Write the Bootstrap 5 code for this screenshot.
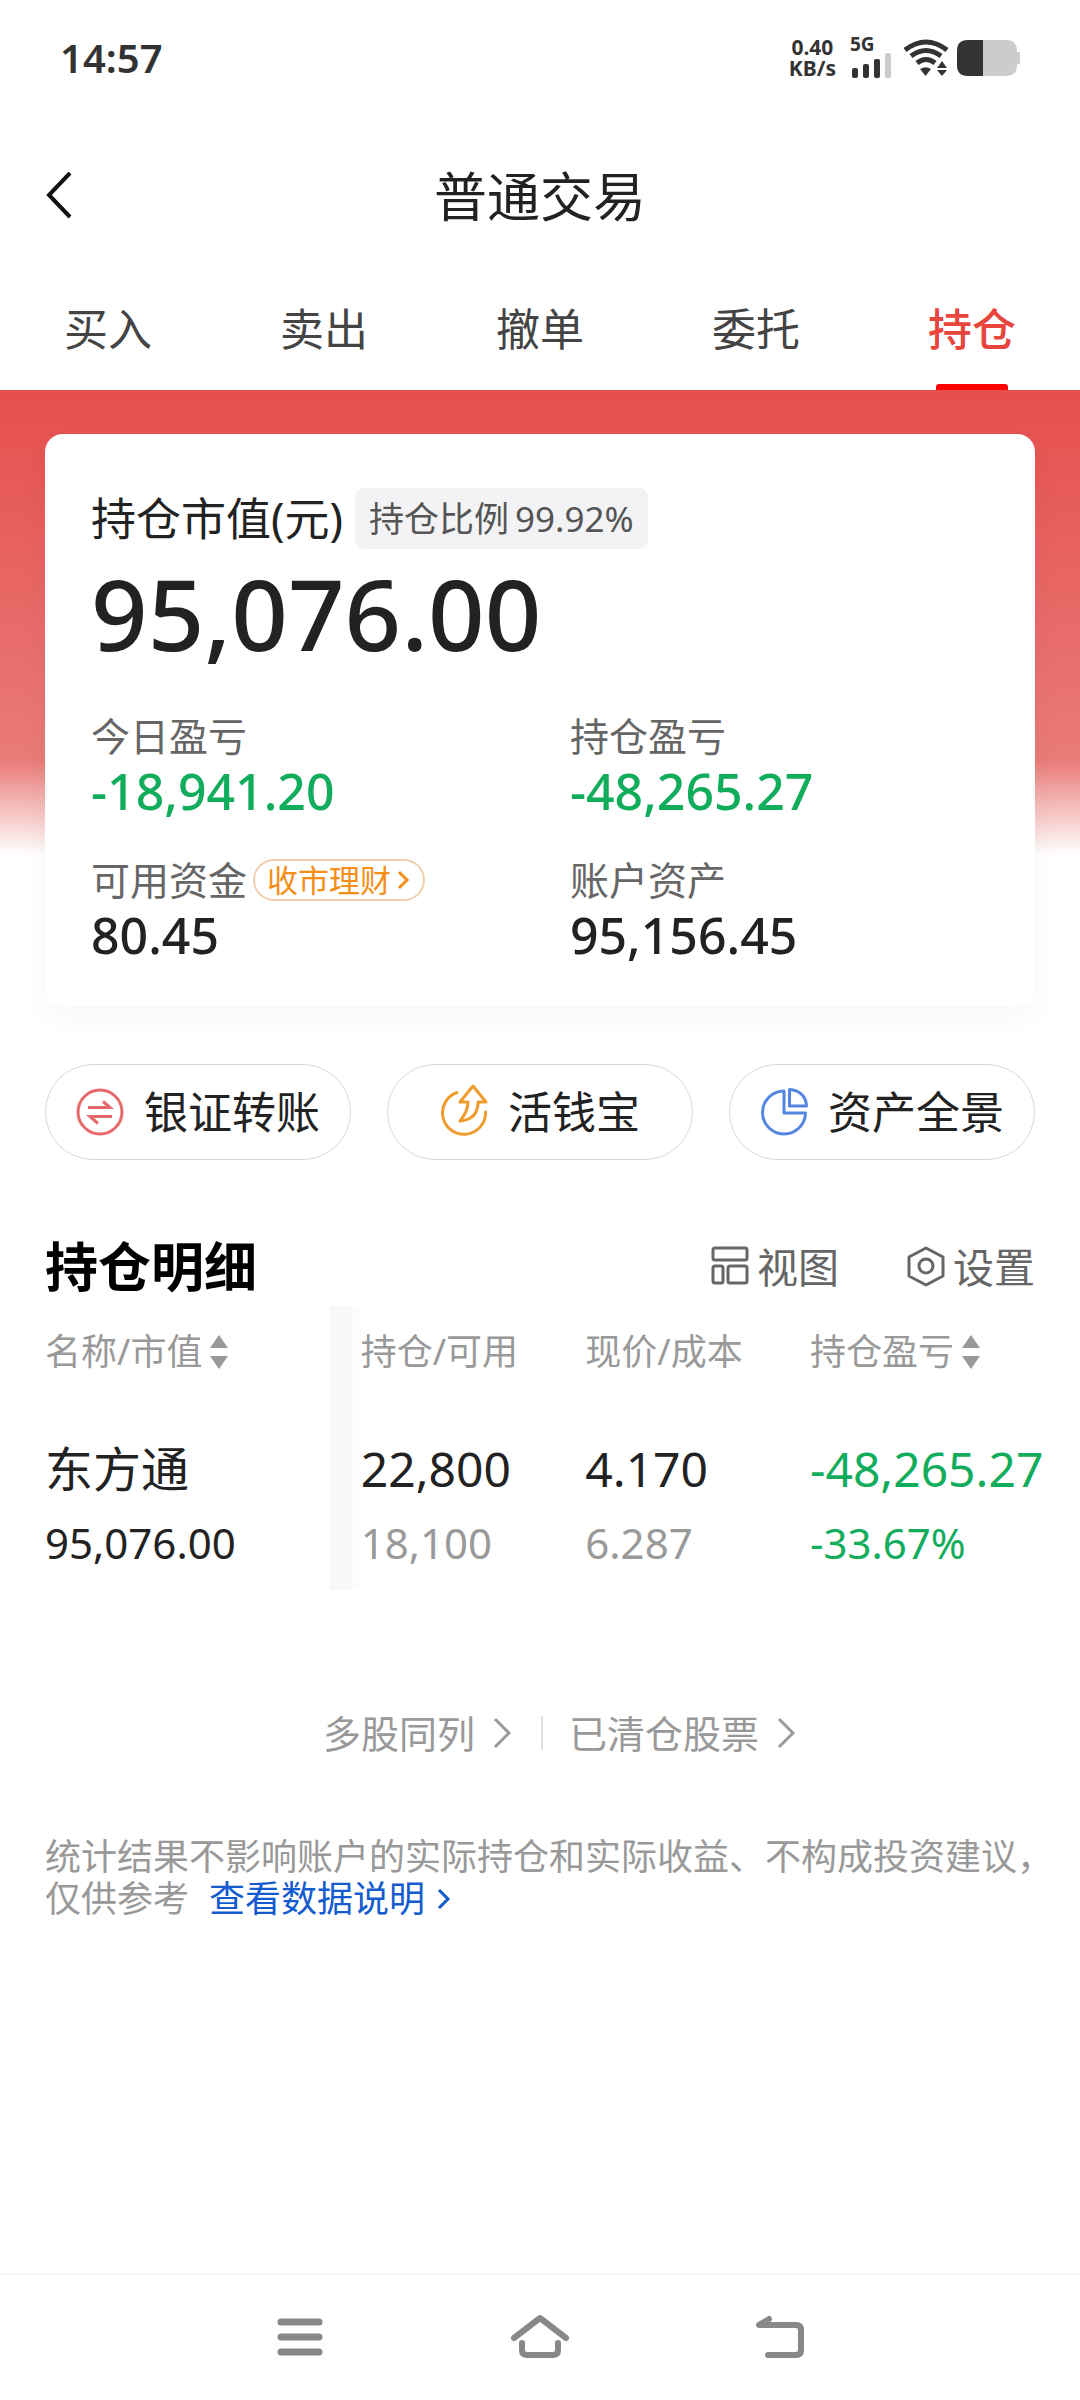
<!DOCTYPE html>
<html lang="zh-CN">
<head>
<meta charset="utf-8">
<meta name="viewport" content="width=device-width, initial-scale=1">
<title>普通交易</title>
<link href="https://cdn.jsdelivr.net/npm/bootstrap@5.3.0/dist/css/bootstrap.min.css" rel="stylesheet">
<style>
  body { font-family: "Noto Sans", "Noto Sans CJK SC", sans-serif; color: #222; background: #fff; }
  a { text-decoration: none; }
  svg { display: block; flex: none; fill: none; }
  button { border: 0; background: none; padding: 0; color: inherit; }

  .status-bar { height: 116px; padding: 0 60px; color: #333; font-weight: 700; }
  .clock { font-size: 40px; font-weight: 600; line-height: 48px; }
  .net-speed { font-size: 21px; line-height: 21px; margin-right: 14px; }
  .cell-type { font-size: 19px; line-height: 16px; }
  .signal { margin: 0 9px 2px 0; }

  .title-bar { height: 162px; padding: 0 45px; }
  .title-bar h1 { font-size: 53px; line-height: 72px; font-weight: 400; color: #222; }
  .side-slot { width: 60px; }

  .trade-tabs { height: 112px; }
  .trade-tabs .nav-link { position: relative; height: 112px; padding: 21px 0 0; font-size: 44px; line-height: 60px; color: #444; }
  .trade-tabs .nav-link.active { color: #e8453c; font-weight: 500; }
  .trade-tabs .nav-link.active::after { content: ""; position: absolute; left: 50%; bottom: 0; width: 72px; height: 6px; margin-left: -36px; border-radius: 3px 3px 0 0; background: #fe0000; }

  .hero { padding: 44px 45px 0; background: linear-gradient(#e54f4e 0, #ea7b78 370px, #fff 465px); }
  .asset-card { border: 0; border-radius: 18px; padding: 54px 46px 44px; box-shadow: 0 10px 30px rgba(0,0,0,.04); }
  .asset-title { font-size: 45px; line-height: 61px; }
  .share-tag { font-size: 35px; line-height: 61px; padding: 0 14px; border-radius: 9px; background: #f3f3f5; color: #555; gap: 6px; margin-left: 12px; }
  .total { font-size: 99px; line-height: 128px; font-weight: 500; }
  .stats { display: grid; grid-template-columns: 8fr 7fr; row-gap: 34px; margin-top: 32px; }
  .stats dt { font-size: 39px; line-height: 54px; font-weight: 400; color: #666; gap: 6px; }
  .stats dd { font-size: 50px; line-height: 56px; font-weight: 500; margin: 0; }
  .down { color: #12ad5c !important; }
  .finance { height: 42px; padding: 0 12px; gap: 6px; border: 2px solid #f0cfae; border-radius: 21px; font-size: 31px; line-height: 38px; color: #f58e17; }

  .quick { padding: 57px 45px 0; gap: 36px; }
  .quick button { flex: 1 1 0; height: 96px; border: 1px solid #d8d8d8; border-radius: 48px; gap: 20px; font-size: 44px; line-height: 60px; color: #222; }

  .detail-head { padding: 68px 45px 0; }
  .detail-head h2 { font-size: 53px; line-height: 78px; font-weight: 700; color: #000; }
  .tools { gap: 68px; font-size: 41px; line-height: 60px; color: #666; }
  .tools button { gap: 8px; }

  .holdings { table-layout: fixed; }
  .holdings th, .holdings td { padding: 0; white-space: nowrap; vertical-align: top; font-weight: 400; background-color: transparent; }
  .holdings thead th { font-size: 36px; line-height: 92px; color: #999; }
  .holdings thead button { gap: 8px; }
  .holdings tbody th, .holdings tbody td { padding: 34px 0 10px; color: #222; }
  .holdings tr > :first-child { padding-left: 45px; background: linear-gradient(to right, #f8f8f8 22px, #fcfcfc 22px) right / 31px 100% no-repeat; }
  .name-col { width: 33.4%; }
  .num-col { width: 20.8%; }
  .row-main { font-size: 48px; line-height: 74px; }
  .row-sub { font-size: 42px; line-height: 74px; }
  .dim { color: #999; }

  .more { padding-top: 113px; font-size: 38px; line-height: 60px; }
  .more a { flex: 1 1 0; gap: 18px; color: #999; }
  .more a:first-child { padding-right: 30px; }
  .more a:last-child { padding-left: 26px; }
  .more-line { width: 2px; height: 34px; background: #e0e0e0; }

  .notice { padding: 73px 20px 0 45px; font-size: 36px; line-height: 42px; color: #999; }
  .notice a { margin-left: 20px; gap: 12px; color: #145bcf; }

  .sys-nav { height: 127px; padding: 0 180px 2px; border-top: 2px solid #f4f4f4; }
  .sys-nav button { flex: 1 1 0; }
</style>
</head>
<body class="d-flex flex-column min-vh-100">

<div class="status-bar d-flex align-items-center justify-content-between">
  <span class="clock">14:57</span>
  <div class="d-flex align-items-center">
    <div class="net-speed text-center"><div>0.40</div><div>KB/s</div></div>
    <div class="signal">
      <div class="cell-type">5G</div>
      <svg width="44" height="26" viewBox="0 0 44 26"><g fill="#333"><rect x="2" y="16" width="6" height="10" rx="2"/><rect x="13" y="12" width="6" height="14" rx="2"/><rect x="24" y="7" width="6" height="19" rx="2"/></g><rect x="35" y="1" width="6" height="25" rx="2" fill="#ccc"/></svg>
    </div>
    <svg width="54" height="40" viewBox="0 0 54 40"><g stroke="#333" stroke-width="5"><path d="M2 12Q23-4 44 12"/><path d="M8 18Q23 7 38 18"/><path d="M14 25Q23 18 32 25"/></g><g fill="#333"><path d="M17 31q6-3.500 11 0l-5.500 7z"/><path d="M34 30l5-7 5 7zM34 32h10l-5 6z"/></g></svg>
    <svg width="63" height="36" viewBox="0 0 63 36"><path d="M11 0h38q11 0 11 11v1h3v12h-3v1q0 11-11 11H11Q0 36 0 25V11Q0 0 11 0z" fill="#ccc"/><path d="M11 0h15v36H11Q0 36 0 25V11Q0 0 11 0z" fill="#333"/></svg>
  </div>
</div>

<header class="title-bar d-flex align-items-center justify-content-between">
  <button type="button" class="side-slot" aria-label="返回"><svg width="28" height="50" viewBox="0 0 28 50" stroke="#111" stroke-width="4"><path d="M25 1L4 23l21 22"/></svg></button>
  <h1 class="mb-0">普通交易</h1>
  <span class="side-slot"></span>
</header>

<nav class="trade-tabs nav nav-fill flex-nowrap">
  <a class="nav-link w-100" href="#">买入</a>
  <a class="nav-link w-100" href="#">卖出</a>
  <a class="nav-link w-100" href="#">撤单</a>
  <a class="nav-link w-100" href="#">委托</a>
  <a class="nav-link w-100 active" href="#" aria-current="page">持仓</a>
</nav>

<main>
  <section class="hero">
    <div class="asset-card card">
      <div class="d-flex align-items-center">
        <span class="asset-title">持仓市值(元)</span>
        <span class="share-tag d-flex"><span>持仓比例</span><span>99.92%</span></span>
      </div>
      <div class="total">95,076.00</div>
      <dl class="stats mb-0">
        <div><dt class="d-flex">今日盈亏</dt><dd class="down">-18,941.20</dd></div>
        <div><dt class="d-flex">持仓盈亏</dt><dd class="down">-48,265.27</dd></div>
        <div>
          <dt class="d-flex align-items-center">可用资金
            <a class="finance d-flex align-items-center" href="#">收市理财<svg width="14" height="22" viewBox="0 0 14 22" stroke="#f58e17" stroke-width="3"><path d="M2 3l8 8-8 8"/></svg></a>
          </dt>
          <dd>80.45</dd>
        </div>
        <div><dt class="d-flex">账户资产</dt><dd>95,156.45</dd></div>
      </dl>
    </div>
  </section>

  <div class="quick d-flex">
    <button type="button" class="d-flex align-items-center justify-content-center">
      <svg width="48" height="48" viewBox="0 0 48 48" stroke="#e9686c" stroke-width="3"><circle cx="24" cy="24" r="22"/><path d="M12 19.500h22l-7-6M36 28.500H14l8 7"/></svg>银证转账</button>
    <button type="button" class="d-flex align-items-center justify-content-center">
      <svg width="48" height="58" viewBox="0 0 48 58" stroke="#f09c2c" stroke-width="3" stroke-linejoin="round" stroke-linecap="round"><path d="M17 9.500A21.500 21.500 0 1 0 45.500 29"/><path d="M33 3L20 19h8c0 8-3 13-8 19 12-1 18-8 18-19h8z"/></svg>活钱宝</button>
    <button type="button" class="d-flex align-items-center justify-content-center">
      <svg width="48" height="48" viewBox="0 0 48 48" stroke="#5485e0" stroke-width="3" stroke-linejoin="round"><path d="M24 3A21.500 21.500 0 1 0 45.500 25H24z"/><path d="M29.500 1.500V18H46.500C46 8 39 2 29.500 1.500z"/></svg>资产全景</button>
  </div>

  <div class="detail-head d-flex align-items-center justify-content-between">
    <h2 class="mb-0">持仓明细</h2>
    <div class="tools d-flex">
      <button type="button" class="d-flex align-items-center"><svg width="38" height="42" viewBox="0 0 38 42" stroke="#666" stroke-width="3"><rect x="2" y="2" width="34" height="12" rx="2"/><rect x="2" y="20" width="10" height="17" rx="2"/><rect x="17" y="20" width="19" height="17" rx="2"/></svg>视图</button>
      <button type="button" class="d-flex align-items-center"><svg width="38" height="42" viewBox="0 0 38 42" stroke="#666" stroke-width="3" stroke-linejoin="round"><path d="M19 2l17 9v19l-17 9-17-9v-19z"/><circle cx="19" cy="20" r="7"/></svg>设置</button>
    </div>
  </div>

  <table class="holdings table table-borderless mb-0">
    <thead>
      <tr>
        <th class="name-col" scope="col"><button type="button" class="d-flex align-items-center">名称/市值<svg width="18" height="34" viewBox="0 0 18 34"><path d="M9 0l9 13H0zM9 34l9-13H0z" fill="#999"/></svg></button></th>
        <th class="num-col" scope="col">持仓/可用</th>
        <th class="num-col" scope="col">现价/成本</th>
        <th scope="col"><button type="button" class="d-flex align-items-center">持仓盈亏<svg width="18" height="34" viewBox="0 0 18 34"><path d="M9 0l9 13H0zM9 34l9-13H0z" fill="#999"/></svg></button></th>
      </tr>
    </thead>
    <tbody>
      <tr>
        <th scope="row"><div class="row-main">东方通</div><div class="row-sub">95,076.00</div></th>
        <td><div class="row-main">22,800</div><div class="row-sub dim">18,100</div></td>
        <td><div class="row-main">4.170</div><div class="row-sub dim">6.287</div></td>
        <td class="down"><div class="row-main">-48,265.27</div><div class="row-sub">-33.67%</div></td>
      </tr>
    </tbody>
  </table>

  <div class="more d-flex align-items-center">
    <a class="d-flex align-items-center justify-content-end" href="#">多股同列<svg width="18" height="32" viewBox="0 0 18 32" stroke="#999" stroke-width="3"><path d="M2 2l14 14L2 30"/></svg></a>
    <span class="more-line"></span>
    <a class="d-flex align-items-center" href="#">已清仓股票<svg width="18" height="32" viewBox="0 0 18 32" stroke="#999" stroke-width="3"><path d="M2 2l14 14L2 30"/></svg></a>
  </div>

  <p class="notice mb-0">统计结果不影响账户的实际持仓和实际收益、不构成投资建议，仅供参考<a class="d-inline-flex align-items-center" href="#">查看数据说明<svg width="14" height="24" viewBox="0 0 14 24" stroke="#145bcf" stroke-width="3"><path d="M2 3l9 9-9 9"/></svg></a></p>
</main>

<footer class="sys-nav mt-auto d-flex align-items-center">
  <button type="button" class="d-flex justify-content-center" aria-label="最近任务"><svg width="46" height="44" viewBox="0 0 46 44" stroke="#888" stroke-width="7" stroke-linecap="round"><path d="M4 7h38M4 22h38M4 37h38"/></svg></button>
  <button type="button" class="d-flex justify-content-center" aria-label="主屏幕"><svg width="60" height="46" viewBox="0 0 60 46" stroke="#888" stroke-width="6" stroke-linecap="round" stroke-linejoin="round"><path d="M4 24L30 4l26 20"/><path d="M12 29v7q0 5 5 5h26q5 0 5-5v-7"/></svg></button>
  <button type="button" class="d-flex justify-content-center" aria-label="返回上一级"><svg width="50" height="46" viewBox="0 0 50 46" stroke="#888" stroke-width="6" stroke-linecap="round" stroke-linejoin="round"><path d="M14 5L4 11h37q5 0 5 5v20q0 5-5 5H13"/></svg></button>
</footer>

<script src="https://cdn.jsdelivr.net/npm/bootstrap@5.3.0/dist/js/bootstrap.bundle.min.js"></script>
</body>
</html>
